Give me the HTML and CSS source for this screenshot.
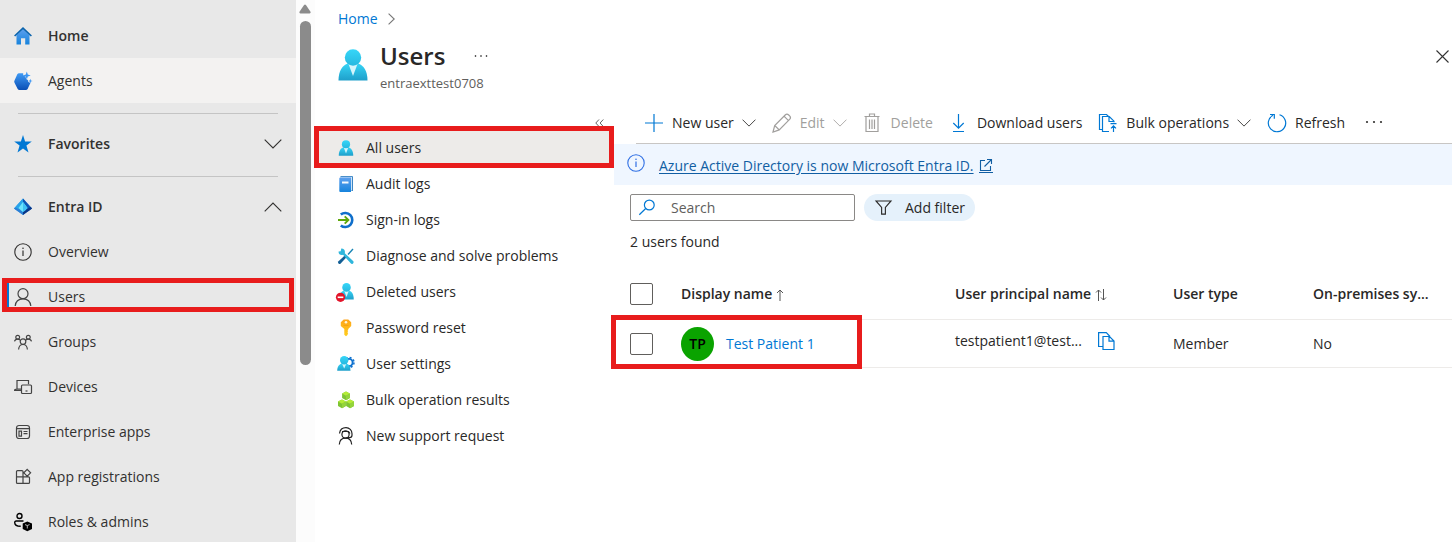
FILE: index.html
```html
<!DOCTYPE html>
<html lang="en">

<head>
    <meta charset="UTF-8">
    <meta name="viewport" content="width=device-width, initial-scale=1.0">
    <title>Users - Microsoft Entra admin center</title>
    <link rel="stylesheet" href="styles.css">
</head>

<body>
    <!-- shared gradients and symbols -->
    <svg class="defs" width="0" height="0" aria-hidden="true">
        <defs>
            <linearGradient id="cyan" x1="0" y1="0" x2="0" y2="1">
                <stop offset="0" stop-color="#36d4f6" />
                <stop offset="1" stop-color="#1f9fca" />
            </linearGradient>
            <linearGradient id="head" x1="0" y1="0" x2="0" y2="1">
                <stop offset="0" stop-color="#36d6f8" />
                <stop offset="1" stop-color="#27b8e0" />
            </linearGradient>
            <linearGradient id="blue" x1="0" y1="0" x2="0" y2="1">
                <stop offset="0" stop-color="#5ea0ef" />
                <stop offset="1" stop-color="#1683dc" />
            </linearGradient>
            <linearGradient id="deep" x1="0" y1="0" x2="0" y2="1">
                <stop offset="0" stop-color="#3f9af5" />
                <stop offset="1" stop-color="#0a4fb5" />
            </linearGradient>
            <linearGradient id="gold" x1="0" y1="0" x2="0" y2="1">
                <stop offset="0" stop-color="#fea51b" />
                <stop offset="1" stop-color="#ffce1c" />
            </linearGradient>
        </defs>
        <symbol id="person" viewBox="0 0 30 32">
            <path d="M29.500 31.500H.500C.500 22 4.500 16 10 14.500h10C25.500 16 29.500 22 29.500 31.500z" fill="url(#cyan)" />
            <path d="M10.500 15h9L15 27z" fill="#d5f5fc" />
            <circle cx="15" cy="8.500" r="8.200" fill="url(#head)" />
        </symbol>
        <symbol id="down" viewBox="0 0 18 10">
            <path d="M.7 .7L9 9 17.300 .7" fill="none" stroke="currentColor" stroke-width="1.100" />
        </symbol>
        <symbol id="up" viewBox="0 0 18 10">
            <path d="M.7 9.300L9 1 17.300 9.300" fill="none" stroke="currentColor" stroke-width="1.100" />
        </symbol>
        <symbol id="info" viewBox="0 0 18 18">
            <circle cx="9" cy="9" r="8.200" fill="none" stroke="currentColor" stroke-width="1.100" />
            <path d="M9 7.500v5.500" stroke="currentColor" stroke-width="1.200" />
            <circle cx="9" cy="5.300" r=".8" fill="currentColor" />
        </symbol>
    </svg>

    <div class="layout">
        <nav class="sidebar" aria-label="Main">
            <a class="side-item strong" href="#">
                <svg class="icon" viewBox="0 0 18 18"><path d="M2.500 8L9 1.800 15.500 8v9.500h-4.300v-6.300H7v6.300H2.500z" fill="url(#blue)" /><path d="M.6 9L9 1.200 17.400 9" fill="none" stroke="#0b64ad" stroke-width="1.600" /></svg>
                Home
            </a>
            <a class="side-item hover" href="#">
                <svg class="icon" viewBox="0 0 18 18"><path d="M5 1.200h4.200c-.4 1.800.6 2.800 2.300 3.300.3 2 1 3.200 2.400 3.500-.1 1.700.9 2.700 2.600 2.700L13.600 16.900c-.4.700-1 1.100-1.800 1.100H5.500c-.8 0-1.400-.4-1.800-1.100L.5 10.700c-.4-.7-.4-1.500 0-2.200L3.300 2.300c.4-.7 1-1.100 1.700-1.100z" fill="url(#deep)" /><path d="M12.800-.5l1 3L16.700 3.500l-2.900 1-1 3-1-3-2.900-1 2.900-1zM16.300 6.700l.6 1.700 1.700.6-1.700.6-.6 1.700-.6-1.700-1.700-.6 1.700-.6z" fill="#3c96f3" /></svg>
                Agents
            </a>
            <hr>
            <button class="side-item strong" type="button">
                <svg class="icon" viewBox="0 0 18 18"><path d="M9 0l2.100 6.500h6.700l-5.400 4 2.100 7L9 13.400 3.500 17.500l2.100-7-5.400-4h6.700z" fill="#0078d4" /></svg>
                Favorites
                <svg class="caret"><use href="#down" /></svg>
            </button>
            <hr>
            <button class="side-item strong" type="button" aria-expanded="true">
                <svg class="icon" viewBox="0 0 18 18"><path d="M9 .5L18 10.500l-9 6.500-9-6.500z" fill="#2b8ede" /><path d="M9 .5L18 10.500l-4.500 3L9 9z" fill="#0d55b5" /><path d="M9 .5L0 10.500l3.500 2L9 6z" fill="#27a4ea" /><path d="M9 4l4.500 6L9 14.200 4.500 10z" fill="#6ce4fb" /><path d="M9 4l4.500 6L9 14.200z" fill="#3fc2f4" /><path d="M0 10.500L9 17v-2.800L2 9.500z" fill="#2b7fd6" /><path d="M9 17l9-6.500-1.500-1.700L9 14.200z" fill="#0a3686" /></svg>
                Entra ID
                <svg class="caret"><use href="#up" /></svg>
            </button>
            <a class="side-item" href="#">
                <svg class="icon"><use href="#info" /></svg>
                Overview
            </a>
            <a class="side-item current" href="#">
                <svg class="icon line" viewBox="0 0 18 18"><circle cx="9" cy="5.700" r="5" /><path d="M1.200 18c.4-4.500 3.400-7.200 7.800-7.200s7.400 2.700 7.800 7.200" /></svg>
                Users
            </a>
            <a class="side-item" href="#">
                <svg class="icon line" viewBox="0 0 18 18"><circle cx="9" cy="8.600" r="2.800" /><path d="M4.600 16.500c.2-3 1.900-5 4.400-5s4.200 2 4.400 5" /><circle cx="3.700" cy="4.200" r="1.900" /><circle cx="14.300" cy="4.200" r="1.900" /><path d="M.5 8.300C.9 6.800 2 6.100 3.700 6.100c1.100 0 1.900.3 2.400 1M17.500 8.300c-.4-1.500-1.500-2.200-3.200-2.200-1.100 0-1.900.3-2.400 1" /></svg>
                Groups
            </a>
            <a class="side-item" href="#">
                <svg class="icon line" viewBox="0 0 18 18"><path d="M7.500 12.500H.6c0-1 1-1.300 2.400-1.300V2.500h11.500v3.700M3 11.200h4.500" /><rect x="7.500" y="7" width="10" height="8.500" rx="1" /><path d="M11.500 13h2" /></svg>
                Devices
            </a>
            <a class="side-item" href="#">
                <svg class="icon line" viewBox="0 0 18 18"><rect x="2.500" y="2.500" width="13" height="13" rx="2.500" /><path d="M2.500 5.700h13M5 8.200h2.500v5H5zM9.500 8.500h4M9.500 10.700h4" /></svg>
                Enterprise apps
            </a>
            <a class="side-item" href="#">
                <svg class="icon line" viewBox="0 0 18 18"><path d="M9 8.800V3.600a1 1 0 0 0-1-1H3.500a1 1 0 0 0-1 1v10.800a1 1 0 0 0 1 1h11a1 1 0 0 0 1-1V9.800a1 1 0 0 0-1-1h-12M9 8.800v6.600M13.200 1.400l3.400 3.400-3.400 3.400-3.400-3.400z" /></svg>
                App registrations
            </a>
            <a class="side-item" href="#">
                <svg class="icon" viewBox="0 0 18 18"><circle cx="5.500" cy="3" r="2.500" fill="none" stroke="#000" stroke-width="1.400" /><path d="M9.500 8H2.200C1.200 8 .7 8.700.7 9.500c0 2.300 2.200 3.800 6 3.800" fill="none" stroke="#000" stroke-width="1.400" /><path d="M13.300 8.500l4.700 2v5.500l-4.700 2.200L8.700 16v-5.500z" /><path d="M11 11.600l2.300.9 2.300-.9M13.300 12.500v3" stroke="#ddd" stroke-width=".8" fill="none" /></svg>
                Roles &amp; admins
            </a>
        </nav>

        <div class="scrollbar">
            <svg class="scroll-arrow" viewBox="0 0 13 10"><path d="M5.500.8a1.300 1.300 0 0 1 2 0l4.800 7c.7 1.100.2 2-1 2H1.700C.5 9.800 0 8.900.7 7.800z" fill="#8b8b8b" /></svg>
            <div class="thumb"></div>
        </div>

        <main class="main">
            <nav class="breadcrumb" aria-label="Breadcrumb">
                <a href="#">Home</a>
                <svg viewBox="0 0 7 12"><path d="M.6.6L6.200 6 .6 11.400" fill="none" stroke="#777" stroke-width="1.100" /></svg>
            </nav>

            <header class="page-head">
                <svg class="page-icon"><use href="#person" /></svg>
                <div>
                    <div class="title-row">
                        <h1>Users</h1>
                        <button class="more" type="button" aria-label="More">
                            <svg viewBox="0 0 14 4"><circle cx="1.500" cy="2" r=".8" /><circle cx="7" cy="2" r=".8" /><circle cx="12.500" cy="2" r=".8" /></svg>
                        </button>
                    </div>
                    <p class="tenant">entraexttest0708</p>
                </div>
                <button class="close" type="button" aria-label="Close">
                    <svg viewBox="0 0 13 13"><path d="M.5.500l12 12M12.500.500l-12 12" stroke="#333" stroke-width="1.100" /></svg>
                </button>
            </header>

            <div class="body">
                <nav class="menu" aria-label="Users">
                    <button class="collapse" type="button" aria-label="Collapse menu">
                        <svg viewBox="0 0 9 8"><path d="M4 .5L.8 4 4 7.500M8.300.5L5.100 4l3.200 3.500" fill="none" stroke="#555" stroke-width=".9" /></svg>
                    </button>
                    <a class="menu-item selected" href="#">
                        <svg class="icon"><use href="#person" /></svg>
                        All users
                    </a>
                    <a class="menu-item" href="#">
                        <svg class="icon" viewBox="0 0 16 16"><path d="M2.500 0H14a1 1 0 0 1 1 1v14H2.500z" fill="#3c86c4" /><path d="M2 .9h12v13.600H2z" fill="#cfe4f7" /><path d="M1.300 2.200A1 1 0 0 1 2.300 1.500H13V16H2.300a1 1 0 0 1-1-1z" fill="url(#blue)" /><path d="M4 5.500h6.500v2H4z" fill="#f3f8fd" /></svg>
                        Audit logs
                    </a>
                    <a class="menu-item" href="#">
                        <svg class="icon" viewBox="0 0 16 16"><path d="M2.800 2.600A7 7 0 1 1 2.800 13.400" fill="none" stroke="#0f6fcb" stroke-width="2.600" /><path d="M0 8h10M6.700 4.300L10.400 8 6.700 11.700" fill="none" stroke="#5ea70c" stroke-width="1.900" /></svg>
                        Sign-in logs
                    </a>
                    <a class="menu-item" href="#">
                        <svg class="icon" viewBox="0 0 16 16"><path d="M14.500.5l1 1-5 5.500-1-1z" fill="#1684b4" /><path d="M7.300 7L9 8.700l-6.300 6.800a1.500 1.500 0 0 1-2.200-2.200z" fill="#135f95" /><path d="M3.300.5l-.6 2.700L.6 3.500C.2 6 2.500 7.600 5 6.800l7.700 8.500a1.600 1.600 0 0 0 2.400-2.200L6.800 5.200C7.500 2.500 5.800.3 3.300.5z" fill="#2fb6dc" /></svg>
                        Diagnose and solve problems
                    </a>
                    <a class="menu-item" href="#">
                        <svg class="icon" viewBox="0 0 16 16"><g transform="translate(1 -1) scale(.5 .52)"><path d="M29.500 31.500H.500C.500 22 4.500 16 10 14.500h10C25.500 16 29.500 22 29.500 31.500z" fill="url(#cyan)" /><path d="M10.500 15h9L15 27z" fill="#d5f5fc" /><circle cx="15" cy="8.500" r="8.500" fill="url(#head)" /></g><circle cx="2.500" cy="13.300" r="4.600" fill="#e3142a" /><path d="M-.3 13.300h5.600" stroke="#fff" stroke-width="1.600" /></svg>
                        Deleted users
                    </a>
                    <a class="menu-item" href="#">
                        <svg class="icon" viewBox="0 0 16 16"><path d="M5.700-.5h4.600l2.900 2.800v3.600L10.200 9v1l-.8.900.8.900-.8 1 .8.900-.7.900v.5L8 16.300l-1.700-1.600V9L2.800 5.900V2.300z" fill="url(#gold)" /><circle cx="8" cy="2.300" r="1.300" fill="#fff5dc" /><path d="M5.500 5.400h5" stroke="#f29a10" stroke-width=".8" /></svg>
                        Password reset
                    </a>
                    <a class="menu-item" href="#">
                        <svg class="icon" viewBox="0 0 16 16"><circle cx="11" cy="6.500" r="3.600" fill="none" stroke="#0f72cf" stroke-width="1.900" /><circle cx="11" cy="6.500" r="5" fill="none" stroke="#0f72cf" stroke-width="1.500" stroke-dasharray="2 1.930" /><path d="M-.800 14.800C-.800 10.500 1.200 8 4.200 7.400h4C11 8 12.500 10.500 12.500 14.800z" fill="url(#cyan)" /><path d="M4 7.600h4.400L6.200 12.500z" fill="#d5f5fc" /><circle cx="6.200" cy="4.200" r="4.200" fill="url(#head)" /></svg>
                        User settings
                    </a>
                    <a class="menu-item" href="#">
                        <svg class="icon" viewBox="0 0 16 16"><path d="M8-.5l3.900 2v4.500L8 8.200 4.100 6V1.500zM4 7.500l3.900 2.100V14L4 16.200 0 14V9.600zM12 7.500l4 2.100V14l-4 2.200L8.100 14V9.600z" fill="#7ec433" /><path d="M8-.5l3.900 2L8 3.800 4.100 1.500zM4 7.500l3.900 2.100L4 11.800 0 9.600zM12 7.500l4 2.100-4 2.200-3.900-2.200z" fill="#b4ec36" /><path d="M8 3.800l3.900-2.300V6L8 8.200zM4 11.800l3.900-2.200V14L4 16.200zM12 11.800l4-2.200V14l-4 2.200z" fill="#94d43c" /></svg>
                        Bulk operation results
                    </a>
                    <a class="menu-item" href="#">
                        <svg class="icon line dark" viewBox="0 0 16 16"><circle cx="7.500" cy="6.500" r="3.600" /><path d="M1.300 16.500c.2-4 2.500-6.400 6.200-6.400s6 2.400 6.200 6.400M1.500 5.500C2 2 4.500-.3 8-.3c3.400 0 6 2.600 6 6v1.500c0 1.600-1 2.400-2.500 2.400H8.500M4 3.500h6.500l1.500 2" /></svg>
                        New support request
                    </a>
                </nav>

                <section class="content">
                    <div class="toolbar">
                        <button type="button">
                            <svg class="tool blue" viewBox="0 0 20 20"><path d="M10 1v18M1 10h18" /></svg>
                            New user
                            <svg class="chev"><use href="#down" /></svg>
                        </button>
                        <button type="button" disabled>
                            <svg class="tool" viewBox="0 0 20 20"><path d="M1 19l1.700-6.500L13.200 2c1-1 2.500-1 3.500 0l.9.900c1 1 1 2.500 0 3.500L7.200 16.900zM12 3.200L16.500 7.700M2.700 12.500l4.500 4.400" /></svg>
                            Edit
                            <svg class="chev"><use href="#down" /></svg>
                        </button>
                        <button type="button" disabled>
                            <svg class="tool" viewBox="0 0 20 20"><path d="M1.500 3.500h15M3 3.500v15h12v-15M6.500 3.500V1h5v2.500M6.500 6.500v9.500M9 6.500v9.500M11.500 6.500v9.500" /></svg>
                            Delete
                        </button>
                        <button type="button">
                            <svg class="tool blue" viewBox="0 0 20 20"><path d="M9.500 1v14M4.300 10L9.500 15.200 14.700 10M4 18.500h11" /></svg>
                            Download users
                        </button>
                        <button type="button">
                            <svg class="tool blue" viewBox="0 0 20 20"><path d="M11 18.500H4.500V3.500h6.800l4.700 4.700v1M11 3.700v4.800h5M4.500 16.500H1.500V1.500h7l2 2M12.500 10.700h6M15.500 19v-6M13 15.300l2.500-2.500 2.500 2.500" /></svg>
                            Bulk operations
                            <svg class="chev"><use href="#down" /></svg>
                        </button>
                        <button type="button">
                            <svg class="tool blue" viewBox="0 0 20 20"><path d="M12.500 1.700A8.700 8.700 0 1 1 6 2.300M3 1.500h4.300v4.300" /></svg>
                            Refresh
                        </button>
                        <button type="button" aria-label="More commands">
                            <svg class="tool dots" viewBox="0 0 20 20"><circle cx="2" cy="9" r="1.100" /><circle cx="9" cy="9" r="1.100" /><circle cx="16" cy="9" r="1.100" /></svg>
                        </button>
                    </div>

                    <div class="banner">
                        <svg class="icon"><use href="#info" /></svg>
                        <a href="#">Azure Active Directory is now Microsoft Entra ID.</a>
                        <a class="external" href="#" aria-label="Open in new tab">
                            <svg viewBox="0 0 14 14"><path d="M6 2.500H1.500v10h10V8M8 1.500h4.500V6M12.500 1.500L5.500 8.500" fill="none" stroke="currentColor" stroke-width="1.100" /></svg>
                        </a>
                    </div>

                    <div class="filters">
                        <label class="search">
                            <svg viewBox="0 0 16 16"><circle cx="10.300" cy="5" r="4.900" /><path d="M6.700 8.500L.300 14.800" /></svg>
                            <input type="text" placeholder="Search" aria-label="Search">
                        </label>
                        <button class="add-filter" type="button">
                            <svg viewBox="0 0 18 16"><path d="M1 1h16l-6 7v7H7V8z" fill="none" stroke="currentColor" stroke-width="1.200" /></svg>
                            Add filter
                        </button>
                    </div>

                    <p class="count">2 users found</p>

                    <div class="table-wrap">
                        <table>
                            <colgroup>
                                <col class="col-check">
                                <col class="col-name">
                                <col class="col-upn">
                                <col class="col-type">
                                <col>
                            </colgroup>
                            <thead>
                                <tr>
                                    <th><input type="checkbox" aria-label="Select all"></th>
                                    <th>Display name
                                        <svg class="sort" viewBox="0 0 12 12"><path d="M4 12V1M1 4l3-3 3 3" /></svg>
                                    </th>
                                    <th>User principal name
                                        <svg class="sort" viewBox="0 0 12 12"><path d="M3.500 12V1M1 3.500L3.500 1 6 3.500M8.500 0v11M6 8.500L8.500 11 11 8.500" /></svg>
                                    </th>
                                    <th>User type</th>
                                    <th>On-premises sy...</th>
                                </tr>
                            </thead>
                            <tbody>
                                <tr>
                                    <td><input type="checkbox" aria-label="Select Test Patient 1"></td>
                                    <td>
                                        <div class="user">
                                            <span class="avatar">TP</span>
                                            <a href="#">Test Patient 1</a>
                                        </div>
                                    </td>
                                    <td>
                                        <div class="upn">
                                            <span>testpatient1@test...</span>
                                            <button type="button" aria-label="Copy">
                                                <svg viewBox="0 0 18 18"><path d="M5 4.500h6.500l4.500 4.500v8.500H5zM11 4.700V9.200h4.800M5 14.500H.6V.7h7.700l3.700 3.800" /></svg>
                                            </button>
                                        </div>
                                    </td>
                                    <td>Member</td>
                                    <td>No</td>
                                </tr>
                            </tbody>
                        </table>
                        <div class="mark"></div>
                    </div>
                </section>
            </div>
        </main>
    </div>
</body>

</html>
```

FILE: styles.css
```css
* {
    box-sizing: border-box;
}

body {
    margin: 0;
    font-family: "Segoe UI", "Open Sans", "Noto Sans", sans-serif;
    font-size: 14px;
    line-height: 20px;
    color: #292827;
    background: #fff;
}

a {
    color: inherit;
    text-decoration: none;
}

button {
    font: inherit;
    color: inherit;
    background: none;
    border: 0;
    padding: 0;
}

svg {
    flex: none;
    overflow: visible;
}

.defs {
    position: absolute;
}

.layout {
    display: flex;
    height: 100vh;
    overflow: hidden;
}

/* left navigation */
.sidebar {
    flex: none;
    width: 296px;
    padding-top: 13px;
    background: #e8e8e8;
    overflow: hidden;
    color: #323130;
}

.side-item {
    display: flex;
    align-items: center;
    gap: 16px;
    position: relative;
    width: 100%;
    height: 45px;
    padding: 0 14px;
}

.side-item .icon {
    width: 18px;
    height: 18px;
}

.side-item.strong {
    font-weight: 600;
}

.side-item.hover {
    background: #f3f2f1;
}

.side-item .caret {
    width: 18px;
    height: 10px;
    margin-left: auto;
}

.side-item.current::before {
    content: "";
    position: absolute;
    left: 7px;
    top: 8px;
    bottom: 11px;
    width: 2px;
    background: #0078d4;
}

.side-item.current::after {
    content: "";
    position: absolute;
    inset: 4px 2px 7px 2px;
    border: 5px solid #e81c1c;
}

.sidebar hr {
    height: 1px;
    margin: 10px 18px 7px;
    border: 0;
    background: #c4c4c4;
}

.line {
    fill: none;
    stroke: #444;
    stroke-width: 1.2;
}

.line.dark {
    stroke: #222;
}

.scrollbar {
    flex: none;
    width: 19px;
    padding: 4px 4px 0 3px;
    background: #fcfcfc;
}

.scroll-arrow {
    display: block;
    width: 12px;
    height: 10px;
}

.thumb {
    height: 64%;
    margin: 7px 0 0 1px;
    border-radius: 6px;
    background: #8b8b8b;
}

/* page header */
.main {
    flex: 1;
    min-width: 0;
}

.breadcrumb {
    display: flex;
    align-items: center;
    gap: 10px;
    height: 38px;
    padding-left: 23px;
}

.breadcrumb a {
    color: #0078d4;
}

.breadcrumb svg {
    width: 7px;
    height: 12px;
}

.page-head {
    display: flex;
    gap: 12px;
    padding: 0 3px 10px 23px;
}

.page-icon {
    width: 30px;
    height: 32px;
    margin-top: 11px;
}

.title-row {
    display: flex;
    align-items: center;
    gap: 29px;
    height: 36px;
}

h1 {
    margin: 0;
    font-size: 24px;
    font-weight: 600;
    line-height: 36px;
}

.more svg {
    display: block;
    width: 14px;
    height: 4px;
}

.tenant {
    margin: 0;
    font-size: 13px;
    line-height: 18px;
    color: #605e5c;
}

.close {
    align-self: flex-start;
    margin: 12px 0 0 auto;
}

.close svg {
    display: block;
    width: 13px;
    height: 13px;
}

.body {
    display: flex;
}

/* section menu */
.menu {
    flex: none;
    width: 299px;
}

.collapse {
    display: flex;
    align-items: flex-end;
    justify-content: flex-end;
    width: 100%;
    height: 28px;
    padding: 0 10px 3px;
}

.collapse svg {
    width: 9px;
    height: 8px;
}

.menu-item {
    display: flex;
    align-items: center;
    gap: 12px;
    position: relative;
    height: 36px;
    padding-left: 23px;
}

.menu-item .icon {
    width: 16px;
    height: 16px;
}

.menu-item.selected {
    background: #edebe9;
}

.menu-item.selected::after {
    content: "";
    position: absolute;
    inset: -4px 0 -2px -1px;
    border: 5px solid #e81c1c;
}

/* command bar */
.content {
    flex: 1;
    min-width: 0;
}

.toolbar {
    display: flex;
    align-items: center;
    gap: 16px;
    height: 42px;
    margin-left: 22px;
    padding-left: 8px;
    border-bottom: 1px solid #c8c6c4;
    white-space: nowrap;
}

.toolbar button {
    display: flex;
    align-items: center;
    gap: 8px;
}

.toolbar button:disabled {
    color: #a19f9d;
}

.tool {
    width: 20px;
    height: 20px;
    fill: none;
    stroke: currentColor;
    stroke-width: 1.2;
}

.tool.blue {
    stroke: #0078d4;
}

.tool.dots {
    margin-left: 4px;
    fill: #323130;
    stroke: none;
}

.chev {
    width: 14px;
    height: 8px;
}

.banner {
    display: flex;
    align-items: center;
    height: 41px;
    padding: 2px 13px 0;
    background: #eff6ff;
    color: #115ea3;
}

.banner .icon {
    width: 18px;
    height: 18px;
    margin: 0 14px 6px 0;
    color: #2f6fe4;
}

.banner a {
    text-decoration: underline;
    text-underline-offset: 2px;
}

.banner .external {
    margin-left: 5px;
    border-bottom: 1px solid #115ea3;
}

.external svg {
    display: block;
    width: 14px;
    height: 14px;
}

.filters {
    display: flex;
    gap: 9px;
    padding: 9px 16px 0;
}

.search {
    display: flex;
    align-items: center;
    gap: 16px;
    width: 225px;
    height: 27px;
    padding: 0 8px;
    border: 1px solid #8a8886;
    border-radius: 2px;
}

.search svg {
    width: 16px;
    height: 16px;
    fill: none;
    stroke: #0078d4;
    stroke-width: 1.2;
}

.search input {
    flex: 1;
    min-width: 0;
    padding: 0;
    border: 0;
    outline: 0;
    font: inherit;
    background: none;
}

.search input::placeholder {
    color: #605e5c;
}

.add-filter {
    display: flex;
    align-items: center;
    gap: 13px;
    height: 27px;
    padding: 0 10px 0 11px;
    border-radius: 14px;
    background: #e5f1fb;
}

.add-filter svg {
    width: 17px;
    height: 15px;
}

.count {
    margin: 11px 16px 0;
}

/* users table */
.table-wrap {
    position: relative;
    margin: 17px 0 0 16px;
}

table {
    width: 100%;
    table-layout: fixed;
    border-collapse: collapse;
}

.col-check {
    width: 51px;
}

.col-name {
    width: 274px;
}

.col-upn {
    width: 218px;
}

.col-type {
    width: 140px;
}

th,
td {
    height: 48px;
    padding: 1px 0 0;
    border-bottom: 1px solid #edebe9;
    text-align: left;
    white-space: nowrap;
}

th {
    height: 50px;
    font-weight: 600;
}

th input,
td input {
    display: block;
    appearance: none;
    width: 23px;
    height: 22px;
    margin: 0;
    border: 1px solid #605e5c;
    border-radius: 2px;
}

.sort {
    width: 12px;
    height: 12px;
    vertical-align: -2px;
    fill: none;
    stroke: #555;
}

.user {
    display: flex;
    align-items: center;
    gap: 12px;
}

.user a {
    color: #0078d4;
}

.avatar {
    width: 33px;
    height: 34px;
    border-radius: 50%;
    background: #0aa300;
    color: #000;
    line-height: 34px;
    font-weight: 600;
    text-align: center;
}

.upn {
    display: flex;
    align-items: center;
    gap: 16px;
    padding-bottom: 6px;
}

.upn svg {
    display: block;
    width: 18px;
    height: 18px;
    fill: none;
    stroke: #0078d4;
    stroke-width: 1.2;
}

/* highlight frame round the user row */
.mark {
    position: absolute;
    left: -19px;
    bottom: -1px;
    width: 251px;
    height: 54px;
    border: 5px solid #e81c1c;
}
```
